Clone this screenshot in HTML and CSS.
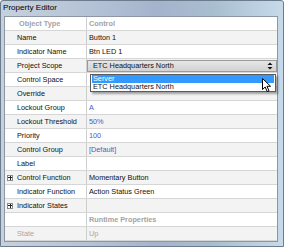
FILE: index.html
```html
<!DOCTYPE html>
<html>
<head>
<meta charset="utf-8">
<link rel="stylesheet" href="styles.css">
</head>
<body>
<div class="window">
  <div class="titlebar">Property Editor</div>
  <div class="panel">
    <div class="row head"><div class="name"><span class="slot"></span>Object Type</div><div class="val">Control</div></div>
    <div class="row alt"><div class="name"><span class="slot"></span>Name</div><div class="val">Button 1</div></div>
    <div class="row"><div class="name"><span class="slot"></span>Indicator Name</div><div class="val">Btn LED 1</div></div>
    <div class="row alt"><div class="name"><span class="slot"></span>Project Scope</div>
      <div class="val combo-cell">
        <div class="combo"><span>ETC Headquarters North</span>
          <svg class="spin" width="6" height="8" viewBox="0 0 6 8"><path d="M3 0.5L5.5 3H0.5Z M3 7.5L5.5 5H0.5Z" fill="#111"/></svg>
        </div>
        <div class="dropdown">
          <div class="opt sel">Server</div>
          <div class="opt">ETC Headquarters North</div>
        </div>
        <svg class="cursor" width="10" height="15" viewBox="0 0 10 15"><path d="M0.5 0.5V11.5L3.2 9L5.2 13.6L7 12.8L5 8.3H8.6Z" fill="#fff" stroke="#000" stroke-width="1" stroke-linejoin="round"/></svg>
      </div>
    </div>
    <div class="row"><div class="name"><span class="slot"></span>Control Space</div><div class="val"></div></div>
    <div class="row alt"><div class="name"><span class="slot"></span>Override</div><div class="val"></div></div>
    <div class="row"><div class="name"><span class="slot"></span>Lockout Group</div><div class="val blue">A</div></div>
    <div class="row alt"><div class="name"><span class="slot"></span>Lockout Threshold</div><div class="val blue">50%</div></div>
    <div class="row"><div class="name"><span class="slot"></span>Priority</div><div class="val blue">100</div></div>
    <div class="row alt"><div class="name"><span class="slot"></span>Control Group</div><div class="val blue">[Default]</div></div>
    <div class="row"><div class="name"><span class="slot"></span>Label</div><div class="val"></div></div>
    <div class="row alt"><div class="name"><span class="slot"><span class="plus"></span></span>Control Function</div><div class="val">Momentary Button</div></div>
    <div class="row"><div class="name"><span class="slot"></span>Indicator Function</div><div class="val">Action Status Green</div></div>
    <div class="row alt"><div class="name"><span class="slot"><span class="plus"></span></span>Indicator States</div><div class="val"></div></div>
    <div class="row head"><div class="name"><span class="slot"></span></div><div class="val">Runtime Properties</div></div>
    <div class="row alt dim"><div class="name"><span class="slot"></span>State</div><div class="val">Up</div></div>
  </div>
</div>
</body>
</html>
```

FILE: styles.css
```css
* { box-sizing: border-box; }
html, body { margin: 0; padding: 0; }
body {
  width: 284px;
  height: 247px;
  overflow: hidden;
  font-family: "Liberation Sans", Arial, sans-serif;
}
.window {
  width: 284px;
  height: 247px;
  display: flex;
  flex-direction: column;
  background:
    linear-gradient(90deg, rgba(200,210,222,0.9) 0%, rgba(176,190,210,0.6) 35%, rgba(150,160,190,0.5) 55%, rgba(160,185,200,0.6) 75%, rgba(200,220,236,0.9) 100%),
    #b4c6da;
  border: 1px solid #6d7c8c;
  border-radius: 3px 3px 0 0;
}
.titlebar {
  height: 15px;
  flex: none;
  font-size: 8.1px;
  line-height: 13px;
  padding-left: 2px;
  color: #000;
}
.panel {
  margin: 0 5px 0 3px;
  background: #fff;
  border: 1px solid #8c97a3;
  display: flex;
  flex-direction: column;
  position: relative;
}
.row {
  display: grid;
  grid-template-columns: 82px 1fr;
  height: 14px;
  border-bottom: 1px solid #d6d6d6;
  font-size: 7.3px;
  line-height: 13px;
  color: #111;
  background: #fff;
}
.row.alt { background: #f3f3f3; }
.name {
  display: flex;
  align-items: center;
  border-right: 1px solid #cfcfcf;
  white-space: nowrap;
  overflow: hidden;
}
.slot {
  width: 12px;
  flex: none;
  display: flex;
  align-items: center;
  padding-left: 2px;
}
.plus {
  width: 6px;
  height: 6px;
  border: 1px solid #8a8a8a;
  background:
    linear-gradient(#222, #222) center / 4px 1px no-repeat,
    linear-gradient(#222, #222) center / 1px 4px no-repeat,
    #fff;
}
.val {
  padding-left: 2px;
  white-space: nowrap;
  overflow: visible;
}
.head { color: #a3a3a3; font-weight: bold; }
.head .name { padding-left: 2px; }
.dim { color: #a8a8a8; }
.blue { color: #4464c4; }
.combo-cell {
  position: relative;
  padding: 1px 0 0 0;
}
.combo {
  height: 12px;
  margin-right: 0;
  border: 1px solid #9a9a9a;
  background: linear-gradient(#e6e6e6, #d2d2d2);
  display: flex;
  align-items: center;
  justify-content: space-between;
  padding: 0 3px 0 5px;
  line-height: 10px;
  color: #111;
}
.spin { display: block; }
.dropdown {
  position: absolute;
  left: 3px;
  right: 1px;
  top: 15px;
  border: 1px solid #5a5a5a;
  background: #fff;
  box-shadow: 2px 2px 2px rgba(0,0,0,0.35);
  padding: 0 1px;
  z-index: 2;
}
.opt {
  height: 8px;
  line-height: 8px;
  padding-left: 1px;
  color: #111;
}
.opt.sel { background: #3399ff; color: #fff; }
.cursor {
  position: absolute;
  left: 175px;
  top: 19px;
  z-index: 3;
}
```
